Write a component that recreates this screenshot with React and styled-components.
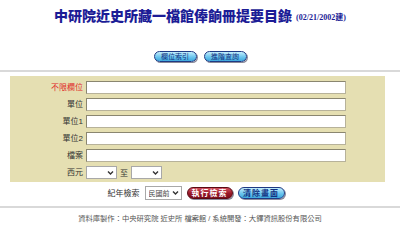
import { Fragment } from 'react';
import styled, { createGlobalStyle } from 'styled-components';

const GlobalStyle = createGlobalStyle`
  body {
    margin: 0;
    background: #fff;
    font-family: "Liberation Sans", "Noto Sans CJK TC", sans-serif;
  }
`

const Page = styled.div`
  width: 400px;
  height: 233px;
  overflow: hidden;
`

const Title = styled.h1`
  margin: 0;
  padding-top: 7px;
  text-align: center;
  font-family: "Noto Sans CJK TC", serif;
  font-weight: 900;
  font-size: 14px;
  line-height: 16px;
  color: #1c1c96;
  white-space: nowrap;
`

const DateNote = styled.span`
  font-family: "Liberation Serif", "Noto Sans CJK TC", serif;
  font-size: 8px;
  font-weight: bold;
  margin-left: 4px;
  vertical-align: 1px;
`

const Nav = styled.div`
  margin-top: 25px;
  display: flex;
  justify-content: center;
  gap: 7px;
`

const Pill = styled.button`
  box-sizing: border-box;
  width: ${p => p.$w || 43}px;
  height: ${p => p.$h || 11}px;
  padding: 0;
  border-radius: 7px;
  border: 1px solid ${p => (p.$red ? '#5a0a14' : '#1e3a84')};
  background: ${p =>
    p.$red
      ? 'linear-gradient(#d0505e, #9a1828 55%, #7a0c1a)'
      : 'linear-gradient(#c4eefc, #6cc6ee 55%, #3ea8dc)'};
  color: ${p => (p.$red ? '#fff' : '#123080')};
  font-family: "Noto Sans CJK TC", sans-serif;
  font-size: ${p => p.$fs || 7}px;
  font-weight: ${p => (p.$bold ? 700 : 400)};
  line-height: 1;
  letter-spacing: ${p => (p.$bold ? 1 : 0)}px;
  box-shadow: 1px 1px 0 #8a8a9a;
`

const Rule = styled.div`
  margin-top: ${p => p.$mt}px;
  height: 2px;
  background: #d9d9d9;
`

const Panel = styled.div`
  margin: 4px 15px 0 10px;
  padding: 5px 0 3px;
  background: #e5dfb2;
  display: grid;
  grid-template-columns: 73px 260px;
  column-gap: 3px;
  row-gap: 4px;
`

const Label = styled.label`
  font-size: 8px;
  line-height: 13px;
  text-align: right;
  color: ${p => (p.$red ? '#e02828' : '#333')};
`

const TextBox = styled.input`
  box-sizing: border-box;
  height: 13px;
  width: 100%;
  margin: 0;
  border: 1px solid #b7b29a;
  border-top-color: #8a8670;
  border-left-color: #8a8670;
  background: #fff;
`

const Range = styled.div`
  display: flex;
  align-items: center;
  gap: 3px;
`

const SelectWrap = styled.div`
  position: relative;
  width: ${p => p.$w}px;
  height: ${p => p.$h || 13}px;
`

const Select = styled.select`
  appearance: none;
  -webkit-appearance: none;
  box-sizing: border-box;
  display: block;
  width: 100%;
  height: 100%;
  margin: 0;
  padding: 0 0 0 3px;
  border: 1px solid #a8a8a8;
  border-radius: 0;
  background: #fff;
  font-family: "Noto Sans CJK TC", sans-serif;
  font-size: 7px;
  line-height: 12px;
  color: #444;
`

const Chevron = styled.svg`
  position: absolute;
  right: 3px;
  top: 50%;
  margin-top: -3px;
  pointer-events: none;
`

const Small = styled.span`
  font-size: 8px;
  color: #333;
`

const Actions = styled.div`
  margin-top: 3px;
  height: 15px;
  display: flex;
  justify-content: center;
  align-items: center;
  gap: 5px;
  padding-right: 8px;
`

const Footer = styled.div`
  margin-top: 5px;
  text-align: center;
  font-size: 7.3px;
  color: #555;
  white-space: nowrap;
`

function Dropdown({ w, h, children }) {
  return (
    <SelectWrap $w={w} $h={h}>
      <Select>{children}</Select>
      <Chevron width="7" height="6" viewBox="0 0 7 6">
        <path d="M1 1.5 L3.5 4 L6 1.5" fill="none" stroke="#333" strokeWidth="1.4" />
      </Chevron>
    </SelectWrap>
  )
}

const fields = [
  { label: '不限欄位', red: true },
  { label: '單位' },
  { label: '單位1' },
  { label: '單位2' },
  { label: '檔案' },
]

export default function App() {
  return (
    <Page>
      <GlobalStyle />
      <Title>
        中研院近史所藏一檔館俸餉冊提要目錄
        <DateNote>(02/21/2002建)</DateNote>
      </Title>
      <Nav>
        <Pill type="button">欄位索引</Pill>
        <Pill type="button">進階查詢</Pill>
      </Nav>
      <Rule $mt={8} />
      <Panel>
        {fields.map(f => (
          <Fragment key={f.label}>
            <Label $red={f.red}>{f.label}</Label>
            <TextBox type="text" />
          </Fragment>
        ))}
        <Label>西元</Label>
        <Range>
          <Dropdown w={31}><option></option></Dropdown>
          <Small>至</Small>
          <Dropdown w={31}><option></option></Dropdown>
        </Range>
      </Panel>
      <Actions>
        <Small>紀年檢索</Small>
        <Dropdown w={37} h={14}><option>民國前</option></Dropdown>
        <Pill type="button" $red $bold $w={46} $h={12} $fs={8}>執行檢索</Pill>
        <Pill type="button" $bold $w={47} $h={12} $fs={8}>清除畫面</Pill>
      </Actions>
      <Rule $mt={6} />
      <Footer>資料庫製作：中央研究院 近史所 檔案館 / 系統開發：大鐸資訊股份有限公司</Footer>
    </Page>
  )
}
